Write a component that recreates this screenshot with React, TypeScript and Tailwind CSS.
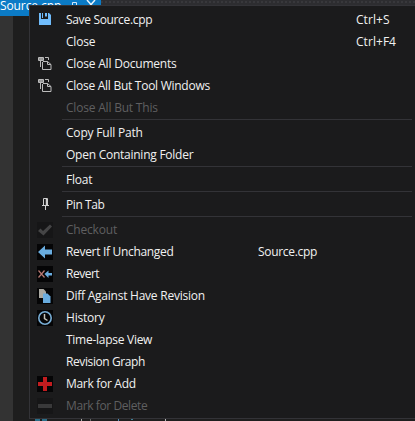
import React from 'react';

type Entry = {
  label: string;
  tracking: string;
  icon?: React.ReactNode;
  shortcut?: string;
  detail?: string;
  disabled?: boolean;
};

const boxed = 'size-4 bg-[#050506]';

const SaveIcon = () => (
  <svg viewBox="0 0 16 16" className="size-4">
    <path d="M2 1h2v6h7V1h1l2 2v10H2z" fill="#70bcfb" />
    <path d="M8 1h2v3.500H8zM5 1h1v5H5z" fill="#70bcfb" />
  </svg>
);

const CloseDocsIcon = () => (
  <svg viewBox="0 0 16 16" className="size-4" fill="none" stroke="#bcbcbc">
    <path d="M1.500 1.500h5v3h-5zM2 2l4 2M6 2L2 4M3.500 5v6M8 1.500h3.500V4" />
    <path d="M5.500 6v7.500h8.500V8.500M6 5.500h4.500L14 8.500M10.500 5.500v3H14" />
  </svg>
);

const PinIcon = () => (
  <svg viewBox="0 0 16 16" className="size-4" fill="none" stroke="#cfcfcf">
    <path d="M6.500 8V1.500h4V8M5 8.500h7M8.500 9v4" />
    <path d="M9.500 2v6" strokeWidth="1.500" />
  </svg>
);

const CheckIcon = () => (
  <svg viewBox="0 0 16 16" className="size-4 bg-[#161617]">
    <path d="M1 9l2.500-2.500L6 9l7-6.500L15 4.500 6.500 13.500z" fill="#454546" />
  </svg>
);

const BackIcon = () => (
  <svg viewBox="0 0 16 16" className={boxed}>
    <path d="M1 8l7-6.500V5.500h7v5H8v4z" fill="#69acdf" />
  </svg>
);

const RevertIcon = () => (
  <svg viewBox="0 0 16 16" className={boxed}>
    <path d="M1.500 4.500l6 7M7.500 4.500l-6 7" stroke="#b87872" strokeWidth="1.200" />
    <path d="M7.500 8l4-3.500V7H15v2.500h-3.500V12z" fill="#69acdf" />
  </svg>
);

const DiffIcon = () => (
  <svg viewBox="0 0 16 16" className={boxed}>
    <path d="M2 1h4.500l2.500 2.500V10H2z" fill="#aaa9a2" />
    <path d="M6 5.500h4.500l3 3V15H6z" fill="#69acdf" />
  </svg>
);

const HistoryIcon = () => (
  <svg viewBox="0 0 16 16" className={boxed} fill="none">
    <circle cx="8" cy="8" r="6.200" stroke="#78add5" strokeWidth="1.600" />
    <path d="M7.500 4v4.500l3 2" stroke="#c4c2b8" strokeWidth="1.500" />
  </svg>
);

const AddIcon = () => (
  <svg viewBox="0 0 16 16" className={boxed}>
    <path d="M6 1h4v5h5v4h-5v5H6v-5H1V6h5z" fill="#c21c1f" />
  </svg>
);

const DeleteIcon = () => (
  <svg viewBox="0 0 16 16" className="size-4 bg-[#161617]">
    <path d="M1 6h14v4H1z" fill="#39393a" />
  </svg>
);

const groups: Entry[][] = [
  [
    { label: 'Save Source.cpp', tracking: 'tracking-[-0.34px]', icon: <SaveIcon />, shortcut: 'Ctrl+S' },
    { label: 'Close', tracking: 'tracking-[-0.2px]', shortcut: 'Ctrl+F4' },
    { label: 'Close All Documents', tracking: 'tracking-[-0.2px]', icon: <CloseDocsIcon /> },
    { label: 'Close All But Tool Windows', tracking: 'tracking-[-0.27px]', icon: <CloseDocsIcon /> },
    { label: 'Close All But This', tracking: 'tracking-[-0.2px]', disabled: true },
  ],
  [
    { label: 'Copy Full Path', tracking: 'tracking-[-0.2px]' },
    { label: 'Open Containing Folder', tracking: 'tracking-[-0.25px]' },
  ],
  [{ label: 'Float', tracking: 'tracking-[-0.2px]' }],
  [{ label: 'Pin Tab', tracking: 'tracking-[-0.42px]', icon: <PinIcon /> }],
  [
    { label: 'Checkout', tracking: 'tracking-[-0.2px]', icon: <CheckIcon />, disabled: true },
    { label: 'Revert If Unchanged', tracking: 'tracking-[-0.32px]', icon: <BackIcon />, detail: 'Source.cpp' },
    { label: 'Revert', tracking: 'tracking-[-0.5px]', icon: <RevertIcon /> },
    { label: 'Diff Against Have Revision', tracking: 'tracking-[-0.24px]', icon: <DiffIcon /> },
    { label: 'History', tracking: 'tracking-[-0.2px]', icon: <HistoryIcon /> },
    { label: 'Time-lapse View', tracking: 'tracking-[-0.27px]' },
    { label: 'Revision Graph', tracking: 'tracking-[-0.4px]' },
    { label: 'Mark for Add', tracking: 'tracking-[-0.3px]', icon: <AddIcon /> },
    { label: 'Mark for Delete', tracking: 'tracking-[-0.4px]', icon: <DeleteIcon />, disabled: true },
  ],
];

function Row({ item }: { item: Entry }) {
  return (
    <div className={`flex h-[22px] items-center ${item.disabled ? 'text-[#5f5f60]' : 'text-[#f1f1f1]'}`}>
      <div className="ml-[7px] mr-[13px] size-4 shrink-0">{item.icon}</div>
      <span className={`w-48 shrink-0 ${item.tracking}`}>{item.label}</span>
      <span className="w-[98px] shrink-0 tracking-[-0.3px]">{item.detail}</span>
      <span className="tracking-[0.05px]">{item.shortcut}</span>
    </div>
  );
}

export default function App() {
  return (
    <div className="relative flex h-[421px] w-[415px] flex-col overflow-hidden bg-[#1e1e1e] font-['Open_Sans','Noto_Sans',sans-serif] text-xs leading-4 whitespace-nowrap">
      <div className="flex h-4 shrink-0 bg-[#2d2d30] bg-[radial-gradient(#39393d_0.7px,transparent_0.8px)] bg-[size:4px_4px]">
        <div className="flex w-[101px] bg-[#0b7bc6] text-white">
          <span className="-mt-[2px] w-[70px] tracking-[-0.1px]">Source.cpp</span>
          <svg viewBox="0 0 8 8" className="h-2 w-2" fill="none" stroke="#d0e8fa">
            <path d="M2.500 6V2.500h4V6" />
          </svg>
          <svg viewBox="0 0 10 10" className="ml-2 size-[10px]" fill="none" stroke="#e8f4fd" strokeWidth="1.500">
            <path d="M1 0l8 9M9 0L1 9" />
          </svg>
        </div>
      </div>
      <div className="flex flex-1">
        <div className="w-[13px] bg-[#333333]" />
        <div className="flex h-[2px] items-start self-end pl-[22px]">
          <div className="h-[2px] w-[5px] bg-[#2b6f8a]" />
          <div className="ml-[2px] h-[2px] w-[5px] bg-[#2b6f8a]" />
          <div className="ml-[34px] h-[2px] w-px bg-[#a8a8a8]" />
          <div className="ml-2 h-[2px] w-px bg-[#686868]" />
          <div className="ml-[27px] h-[2px] w-px bg-[#4f8fc0]" />
          <div className="ml-3 h-px w-[2px] bg-[#3f7f96]" />
          <div className="ml-8 h-[2px] w-px bg-[#b8b8b8]" />
        </div>
      </div>
      <div className="absolute left-[29px] top-[5px] h-[414px] w-[400px] border border-[#333337] bg-[#1b1b1c] pt-[3px]">
        {groups.map((group, i) => (
          <div key={i}>
            {i > 0 && <div className="mb-[2px] ml-8 mr-4 h-px bg-[#333337]" />}
            {group.map((item) => (
              <Row key={item.label} item={item} />
            ))}
          </div>
        ))}
      </div>
    </div>
  );
}
